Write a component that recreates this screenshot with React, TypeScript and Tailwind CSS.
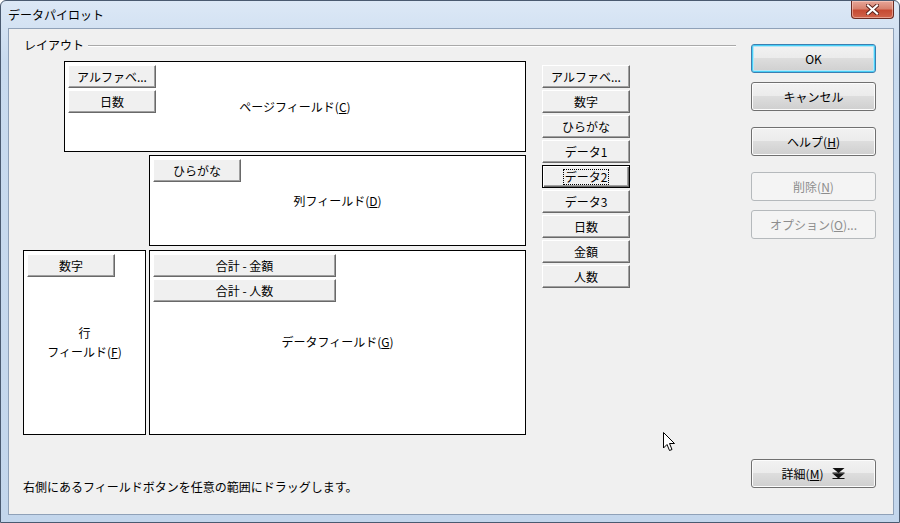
import React from "react";

const font = "[font-family:'Meiryo_UI','Noto_Sans_CJK_JP','Liberation_Sans',sans-serif]";

function FieldBtn({ label, className = "w-[88px]", focus = false }: { label: string; className?: string; focus?: boolean }) {
  return (
    <div
      className={`${className} h-[23px] flex items-center justify-center bg-[#f0f0f0] text-[12px] leading-[16px] text-black border ${
        focus
          ? "border-black shadow-[inset_1px_1px_0_#ffffff,inset_-1px_-1px_0_#696969,inset_-2px_-2px_0_#a0a0a0]"
          : "border-t-white border-l-white border-r-[#696969] border-b-[#696969] shadow-[inset_-1px_-1px_0_#a0a0a0]"
      }`}
    >
      {focus ? <span className="border border-dotted border-black px-[1px] leading-[14px]">{label}</span> : label}
    </div>
  );
}

function DlgBtn({ children, kind = "normal" }: { children: React.ReactNode; kind?: "normal" | "default" | "disabled" }) {
  const base = "w-[125px] h-[29px] rounded-[3px] flex items-center justify-center text-[12px] leading-[16px] border";
  if (kind === "disabled")
    return <div className={`${base} border-[#b5b9bc] bg-[#f4f4f4] text-[#8d8d8d]`}>{children}</div>;
  return (
    <div
      className={`${base} text-black bg-[linear-gradient(to_bottom,#f2f2f2_0%,#ebebeb_50%,#dddddd_50%,#cfcfcf_100%)] ${
        kind === "default"
          ? "border-[#3c7fb1] shadow-[inset_0_0_0_1px_#48d0f7,inset_0_0_0_2px_#b5e6f7]"
          : "border-[#707070] shadow-[inset_0_0_0_1px_#fcfcfc]"
      }`}
    >
      {children}
    </div>
  );
}

export default function App() {
  return (
    <div className={`${font} relative w-[900px] h-[523px] bg-white overflow-hidden`}>
      <div className="w-[900px] h-[523px] flex flex-col rounded-t-[6px] border border-[#4a5a70] bg-[linear-gradient(to_bottom,#dce8f6,#c9dbef_60px,#c3d6ec)] pl-[7px] pr-[5px] pb-[7px]">
        {/* Title bar */}
        <div className="h-[27px] flex items-start justify-between">
          <div className="pt-[6px] text-[12px] leading-[16px] text-black">データパイロット</div>
          <div className="w-[43px] h-[18px] rounded-b-[4px] border border-t-0 border-[#6b2a22] bg-[linear-gradient(to_bottom,#e7a698_0%,#d7826f_45%,#c64a33_55%,#d0634b_100%)] flex items-center justify-center shadow-[inset_0_0_0_1px_rgba(255,220,210,0.5)]">
            <svg width="13" height="11" viewBox="0 0 13 11">
              <path d="M2 1.5 L11 9.5 M11 1.5 L2 9.5" stroke="#5a2019" strokeWidth="4" strokeLinecap="square" />
              <path d="M2 1.5 L11 9.5 M11 1.5 L2 9.5" stroke="#ffffff" strokeWidth="2.2" strokeLinecap="square" />
            </svg>
          </div>
        </div>

        {/* Client area */}
        <div className="flex-1 flex border border-[#8fa1b8] bg-[#f0f0f0] text-black">
          {/* Left: layout group */}
          <div className="w-[727px] flex flex-col">
            <div className="mt-[8px] h-[16px] flex items-center pl-[15px]">
              <span className="text-[12px] leading-[16px]">レイアウト</span>
              <div className="flex-1 ml-[4px] border-t border-[#a9a9a9] shadow-[0_1px_0_#ffffff]" />
            </div>

            <div className="mt-[8px] flex pl-[14px]">
              {/* Fields */}
              <div className="w-[503px] flex flex-col">
                <div className="ml-[41px] w-[462px] h-[91px] border border-black bg-white grid p-[3px]">
                  <div className="col-start-1 row-start-1 self-start justify-self-start flex flex-col gap-[2px]">
                    <FieldBtn label="アルファベ..." />
                    <FieldBtn label="日数" />
                  </div>
                  <div className="col-start-1 row-start-1 place-self-center text-[12px] leading-[16px]">
                    ページフィールド(<u>C</u>)
                  </div>
                </div>

                <div className="mt-[3px] ml-[126px] w-[377px] h-[91px] border border-black bg-white grid p-[3px]">
                  <div className="col-start-1 row-start-1 self-start justify-self-start">
                    <FieldBtn label="ひらがな" />
                  </div>
                  <div className="col-start-1 row-start-1 place-self-center text-[12px] leading-[16px]">
                    列フィールド(<u>D</u>)
                  </div>
                </div>

                <div className="mt-[4px] flex gap-[3px]">
                  <div className="w-[123px] h-[185px] border border-black bg-white grid p-[3px]">
                    <div className="col-start-1 row-start-1 self-start justify-self-start">
                      <FieldBtn label="数字" />
                    </div>
                    <div className="col-start-1 row-start-1 place-self-center text-center text-[12px] leading-[19px] -mt-[2px]">
                      行<br />
                      フィールド(<u>F</u>)
                    </div>
                  </div>
                  <div className="w-[377px] h-[185px] border border-black bg-white grid p-[3px]">
                    <div className="col-start-1 row-start-1 self-start justify-self-start flex flex-col gap-[2px]">
                      <FieldBtn label="合計 - 金額" className="w-[183px] whitespace-pre" />
                      <FieldBtn label="合計 - 人数" className="w-[183px] whitespace-pre" />
                    </div>
                    <div className="col-start-1 row-start-1 place-self-center text-[12px] leading-[16px] -mt-[2px]">
                      データフィールド(<u>G</u>)
                    </div>
                  </div>
                </div>
              </div>

              {/* Available field buttons */}
              <div className="ml-[16px] mt-[4px] flex flex-col gap-[2px]">
                <FieldBtn label="アルファベ..." />
                <FieldBtn label="数字" />
                <FieldBtn label="ひらがな" />
                <FieldBtn label="データ1" />
                <FieldBtn label="データ2" focus />
                <FieldBtn label="データ3" />
                <FieldBtn label="日数" />
                <FieldBtn label="金額" />
                <FieldBtn label="人数" />
              </div>
            </div>

            <div className="mt-auto mb-[19px] pl-[14px] text-[12px] leading-[16px]">
              右側にあるフィールドボタンを任意の範囲にドラッグします。
            </div>
          </div>

          {/* Right: dialog buttons */}
          <div className="ml-[15px] pt-[15px] flex flex-col">
            <DlgBtn kind="default">OK</DlgBtn>
            <div className="mt-[9px]">
              <DlgBtn>キャンセル</DlgBtn>
            </div>
            <div className="mt-[16px]">
              <DlgBtn>
                ヘルプ(<u>H</u>)
              </DlgBtn>
            </div>
            <div className="mt-[16px]">
              <DlgBtn kind="disabled">
                削除(<u>N</u>)
              </DlgBtn>
            </div>
            <div className="mt-[9px]">
              <DlgBtn kind="disabled">
                オプション(<u>O</u>)...
              </DlgBtn>
            </div>
            <div className="mt-auto mb-[26px]">
              <DlgBtn>
                <span>
                  詳細(<u>M</u>)
                </span>
                <svg className="ml-[9px]" width="13" height="13" viewBox="0 0 13 13">
                  <path d="M0.5 1 H12.5 L6.5 6 Z M0.5 6.5 H12.5 L6.5 11.5 Z" fill="#111" />
                  <path d="M0.5 6 H12.5 M0.5 11.5 H12.5" stroke="#111" strokeWidth="1.2" />
                </svg>
              </DlgBtn>
            </div>
          </div>
        </div>
      </div>

      {/* Mouse cursor */}
      <svg className="absolute left-[663px] top-[432px]" width="14" height="21" viewBox="0 0 14 21">
        <path
          d="M0.5 0.5 L0.5 16 L4 12.5 L6.5 18.5 L9 17.5 L6.5 11.5 L11.5 11.5 Z"
          fill="#ffffff"
          stroke="#000000"
          strokeWidth="1"
          strokeLinejoin="miter"
        />
      </svg>
    </div>
  );
}
